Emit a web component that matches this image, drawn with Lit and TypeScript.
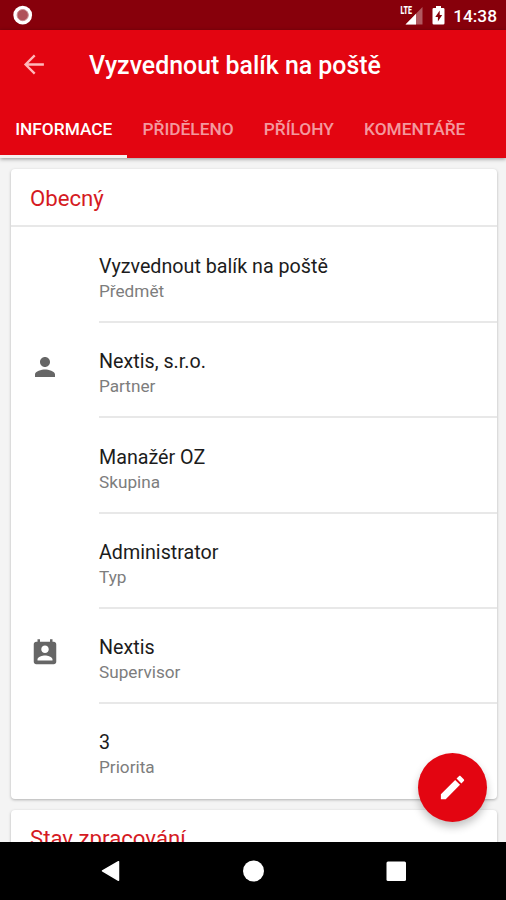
import { LitElement, html, css, svg, nothing } from "lit";
import { customElement, property } from "lit/decorators.js";

type IconName = "person" | "contact";

interface Field {
  value: string;
  label: string;
  icon?: IconName;
}

const FIELDS: Field[] = [
  { value: "Vyzvednout balík na poště", label: "Předmět" },
  { value: "Nextis, s.r.o.", label: "Partner", icon: "person" },
  { value: "Manažér OZ", label: "Skupina" },
  { value: "Administrator", label: "Typ" },
  { value: "Nextis", label: "Supervisor", icon: "contact" },
  { value: "3", label: "Priorita" },
];

const TABS = ["INFORMACE", "PŘIDĚLENO", "PŘÍLOHY", "KOMENTÁŘE"];

const ICONS = {
  person: svg`<path d="M12 12c2.21 0 4-1.79 4-4s-1.79-4-4-4-4 1.79-4 4 1.79 4 4 4zm0 2c-2.67 0-8 1.34-8 4v2h16v-2c0-2.66-5.33-4-8-4z"/>`,
  contact: svg`<path d="M19 3h-1V1h-2v2H8V1H6v2H5c-1.11 0-2 .9-2 2v14c0 1.1.89 2 2 2h14c1.1 0 2-.9 2-2V5c0-1.1-.9-2-2-2zm-7 3c1.66 0 3 1.34 3 3s-1.34 3-3 3-3-1.34-3-3 1.34-3 3-3zm6 12H6v-1c0-2 4-3.1 6-3.1s6 1.1 6 3.1v1z"/>`,
};

@customElement("status-bar")
class StatusBar extends LitElement {
  static styles = css`
    :host {
      display: flex;
      align-items: center;
      height: 30px;
      box-sizing: border-box;
      padding: 0 9px 0 13px;
      background: #87000b;
      color: #fff;
    }
    .spacer { flex: 1; }
    .battery { margin: 0 8px 0 9px; }
    .clock { font-size: 17.3px; font-weight: 500; line-height: 30px; padding-top: 2px; }
    .lte { font: 900 10px Roboto, sans-serif; fill: #fff; }
    svg { display: block; }
  `;
  render() {
    return html`
      <svg width="20" height="20" viewBox="0 0 20 20">
        <circle cx="9.7" cy="10.1" r="9.4" fill="#fff" />
        <circle cx="9.7" cy="10.1" r="5.6" fill="#b0525a" stroke="#c98b90" stroke-width="1" />
      </svg>
      <div class="spacer"></div>
      <svg width="23" height="20" viewBox="0 0 23 20">
        <path d="M22.5 2V19.5H5.5z" fill="#fff" opacity=".35" />
        <path d="M16 8.7V19.5H5.5z" fill="#fff" />
        <text class="lte" x="0.5" y="8.8" textLength="11.5" lengthAdjust="spacingAndGlyphs">LTE</text>
      </svg>
      <svg class="battery" width="13" height="20" viewBox="0 0 13 20">
        <path d="M4 1h5v2h2.2q1.3 0 1.3 1.3v13.9q0 1.3-1.3 1.3H1.8Q.5 19.5.5 18.2V4.3Q.5 3 1.8 3H4z" fill="#fff" />
        <path d="M7.7 5.5L3.3 12h2.6v4.5L10.2 10H7.7z" fill="#87000b" />
      </svg>
      <div class="clock">14:38</div>
    `;
  }
}

@customElement("app-header")
class AppHeader extends LitElement {
  static styles = css`
    :host {
      display: block;
      position: relative;
      height: 127.5px;
      background: #e30511;
      color: #fff;
      box-shadow: 0 1px 4px rgba(0, 0, 0, 0.4);
    }
    .bar { display: flex; align-items: center; height: 70px; padding-left: 22px; }
    .back { display: block; margin-right: 42px; margin-top: -1px; }
    h1 { margin: 0; font-size: 24.9px; line-height: 32px; font-weight: 500; padding-top: 2px; }
    .tabs { display: flex; height: 57.5px; }
    .tab {
      box-sizing: border-box;
      height: 57.5px;
      padding: 0 15px 0 15.2px;
      font-size: 17.3px;
      font-weight: 500;
      line-height: 58px;
      color: rgba(255, 255, 255, 0.6);
      white-space: nowrap;
    }
    .tab.active { color: #fff; border-bottom: 3px solid #f5f1f0; }
  `;
  render() {
    return html`
      <div class="bar">
        <svg class="back" width="25" height="25" viewBox="0 0 24 24">
          <path d="M21 12H4M12.2 3.2L3.4 12l8.8 8.8" fill="none" stroke="#ffb9bb" stroke-width="2.2" />
        </svg>
        <h1>Vyzvednout balík na poště</h1>
      </div>
      <div class="tabs">
        ${TABS.map((t, i) => html`<div class="tab ${i === 0 ? "active" : ""}">${t}</div>`)}
      </div>
    `;
  }
}

@customElement("info-row")
class InfoRow extends LitElement {
  @property({ attribute: false }) field!: Field;
  static styles = css`
    :host { display: flex; height: 95.2px; }
    .icon { width: 88px; box-sizing: border-box; padding: 29px 0 0 19px; flex: none; }
    svg { display: block; fill: #666; }
    .text { flex: 1; box-sizing: border-box; padding-top: 26.2px; border-bottom: 2px solid #e8e8e8; }
    :host(:last-of-type) .text { border-bottom: none; }
    .value { font-size: 19.7px; line-height: 26px; color: #1c1c1c; }
    .label { font-size: 17.2px; line-height: 23px; color: #7d7d7d; }
  `;
  render() {
    const { icon, value, label } = this.field;
    return html`
      <div class="icon">
        ${icon ? html`<svg width="30" height="30" viewBox="0 0 24 24">${ICONS[icon]}</svg>` : nothing}
      </div>
      <div class="text">
        <div class="value">${value}</div>
        <div class="label">${label}</div>
      </div>
    `;
  }
}

@customElement("app-root")
class AppRoot extends LitElement {
  static styles = css`
    :host {
      display: flex;
      flex-direction: column;
      position: relative;
      width: 506px;
      height: 900px;
      overflow: hidden;
      background: #f4f4f4;
      font-family: Roboto, sans-serif;
    }
    status-bar, app-header { flex: none; }
    app-header { z-index: 1; }
    main {
      flex: 1;
      min-height: 0;
      overflow: hidden;
      display: flex;
      flex-direction: column;
      gap: 11px;
      padding: 11.5px 9px 0 11px;
    }
    .card {
      flex: none;
      background: #fff;
      border-radius: 4px;
      box-shadow: 0 1px 3px rgba(0, 0, 0, 0.28);
    }
    .card.main { height: 629.5px; }
    .card.next { height: 200px; }
    h2 {
      margin: 0;
      height: 58px;
      box-sizing: border-box;
      padding: 0 0 0 19px;
      font-size: 22.2px;
      line-height: 58px;
      font-weight: 400;
      color: #d51a23;
      border-bottom: 2px solid #e8e8e8;
    }
    .rows { padding-top: 1px; }
    .next h2 { line-height: 56px; }
    .fab {
      position: absolute;
      right: 19px;
      top: 753px;
      z-index: 2;
      width: 69px;
      height: 69px;
      border-radius: 50%;
      background: #e30511;
      display: grid;
      place-items: center;
      box-shadow: 0 5px 9px rgba(0, 0, 0, 0.24);
    }
    .fab svg { display: block; fill: #fff; }
    nav { flex: none; height: 58px; background: #000; z-index: 3; }
    nav svg { display: block; fill: #fff; }
  `;
  render() {
    return html`
      <status-bar></status-bar>
      <app-header></app-header>
      <main>
        <section class="card main">
          <h2>Obecný</h2>
          <div class="rows">${FIELDS.map((f) => html`<info-row .field=${f}></info-row>`)}</div>
        </section>
        <section class="card next"><h2>Stav zpracování</h2></section>
      </main>
      <div class="fab">
        <svg width="31" height="31" viewBox="0 0 24 24">
          <path d="M3 17.25V21h3.75L17.81 9.94l-3.75-3.75L3 17.25zM20.71 7.04c.39-.39.39-1.02 0-1.41l-2.34-2.34c-.39-.39-1.02-.39-1.41 0l-1.83 1.83 3.75 3.75 1.83-1.83z" />
        </svg>
      </div>
      <nav>
        <svg width="506" height="58" viewBox="0 0 506 58">
          <path d="M102.5 28.8L118.5 19.7v18.6z" stroke="#fff" stroke-width="1.5" stroke-linejoin="round" />
          <circle cx="253.5" cy="29" r="10.5" />
          <rect x="386.5" y="19.5" width="19.5" height="19.5" rx="1.5" />
        </svg>
      </nav>
    `;
  }
}
